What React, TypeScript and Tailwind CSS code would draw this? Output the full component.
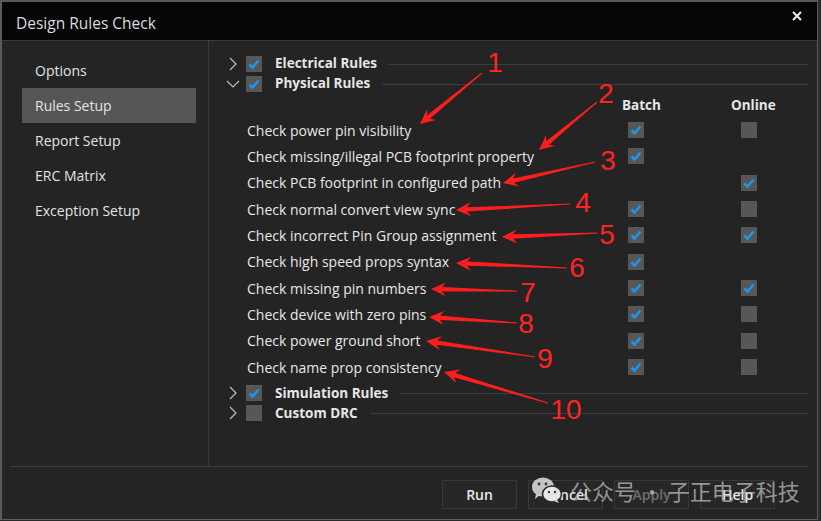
import React from "react";

const FONT = { fontFamily: '"Open Sans", "Noto Sans", "Noto Sans CJK SC", sans-serif' };

function Check({ checked }: { checked: boolean }) {
  return (
    <div className="w-[16px] h-[16px] bg-[#575757] flex items-center justify-center">
      {checked && (
        <svg width="14" height="14" viewBox="0 0 14 14">
          <path d="M2.5 7.5 L5.5 10.5 L11.5 3.5" fill="none" stroke="#1e95ea" strokeWidth="2.6" strokeLinecap="butt" strokeLinejoin="miter" />
        </svg>
      )}
    </div>
  );
}

function Chevron({ open }: { open: boolean }) {
  return (
    <svg width="16" height="16" viewBox="0 0 16 16">
      {open ? (
        <path d="M2 5 L8 11 L14 5" fill="none" stroke="#bdbdbd" strokeWidth="1.2" />
      ) : (
        <path d="M5 2 L11 8 L5 14" fill="none" stroke="#bdbdbd" strokeWidth="1.2" />
      )}
    </svg>
  );
}

function GroupHeader({ label, checked, open }: { label: string; checked: boolean; open: boolean }) {
  return (
    <div className="flex items-center h-[20px]">
      <div className="w-[37px] flex justify-end pr-[5px]">
        <Chevron open={open} />
      </div>
      <Check checked={checked} />
      <div className="ml-[13px] text-[13.5px] font-bold text-[#e6e6e6] leading-none whitespace-nowrap">{label}</div>
      <div className="flex-1 ml-[12px] h-px bg-[#3c3c3c]" />
    </div>
  );
}

type Cell = "on" | "off" | "none";
const rules: { label: string; batch: Cell; online: Cell }[] = [
  { label: "Check power pin visibility", batch: "on", online: "off" },
  { label: "Check missing/illegal PCB footprint property", batch: "on", online: "none" },
  { label: "Check PCB footprint in configured path", batch: "none", online: "on" },
  { label: "Check normal convert view sync", batch: "on", online: "off" },
  { label: "Check incorrect Pin Group assignment", batch: "on", online: "on" },
  { label: "Check high speed props syntax", batch: "on", online: "none" },
  { label: "Check missing pin numbers", batch: "on", online: "on" },
  { label: "Check device with zero pins", batch: "on", online: "off" },
  { label: "Check power ground short", batch: "on", online: "off" },
  { label: "Check name prop consistency", batch: "on", online: "off" },
];

function CellBox({ v }: { v: Cell }) {
  if (v === "none") return <div className="w-[16px] h-[16px]" />;
  return <Check checked={v === "on"} />;
}

function arrowPoints(tx: number, ty: number, px: number, py: number) {
  const dx = px - tx;
  const dy = py - ty;
  const len = Math.sqrt(dx * dx + dy * dy);
  const ux = dx / len;
  const uy = dy / len;
  const nx = -uy;
  const ny = ux;
  const h = 15;
  const w = 7;
  const s = 2.2;
  const t = 0.5;
  const bx = px - ux * h;
  const by = py - uy * h;
  const bx2 = px - ux * (h - 4);
  const by2 = py - uy * (h - 4);
  const pts = [
    [tx + nx * t, ty + ny * t],
    [bx2 + nx * s, by2 + ny * s],
    [bx + nx * w, by + ny * w],
    [px, py],
    [bx - nx * w, by - ny * w],
    [bx2 - nx * s, by2 - ny * s],
    [tx - nx * t, ty - ny * t],
  ];
  return pts.map((p) => `${p[0].toFixed(1)},${p[1].toFixed(1)}`).join(" ");
}

const arrows = [
  { n: "1", nx: 495, ny: 62, t: [482, 73], p: [420, 124] },
  { n: "2", nx: 606, ny: 93, t: [597, 102], p: [539, 150] },
  { n: "3", nx: 608, ny: 160, t: [595, 162], p: [503, 183] },
  { n: "4", nx: 583, ny: 202, t: [570, 204], p: [456, 210] },
  { n: "5", nx: 607, ny: 234, t: [598, 233], p: [502, 237] },
  { n: "6", nx: 577, ny: 267, t: [567, 268], p: [456, 263] },
  { n: "7", nx: 528, ny: 292, t: [517, 291], p: [431, 289] },
  { n: "8", nx: 526, ny: 323, t: [517, 323], p: [429, 317] },
  { n: "9", nx: 545, ny: 358, t: [535, 357], p: [426, 341] },
  { n: "10", nx: 566, ny: 409, t: [548, 403], p: [444, 372] },
];

export default function App() {
  return (
    <div className="w-[821px] h-[521px] bg-[#2b2b2b] relative overflow-hidden" style={FONT}>
      <div className="w-[818px] h-[520px] flex flex-col bg-[#232423] border-t-2 border-l-2 border-b border-r border-[#5a5a5a]">
        {/* title bar */}
        <div className="h-[39px] bg-[#060606] flex items-center justify-between pl-[14px] pr-[14px] border-b border-[#3a3a3a] shrink-0">
          <div className="text-[15.5px] text-[#dcdcdc] mt-[5px]">Design Rules Check</div>
          <svg width="12" height="12" viewBox="0 0 12 12" className="mt-[-10px]">
            <path d="M2 2 L10 10 M10 2 L2 10" stroke="#f0f0f0" strokeWidth="2" />
          </svg>
        </div>
        {/* main */}
        <div className="flex h-[426px] ml-[8px] mr-[8px] border-b border-[#3d3d3d] shrink-0">
          {/* sidebar */}
          <div className="w-[199px] border-r border-[#3a3a3a] pt-[12px] flex flex-col">
            {["Options", "Rules Setup", "Report Setup", "ERC Matrix", "Exception Setup"].map((s) => (
              <div
                key={s}
                className={
                  "h-[35px] mx-[12px] pl-[13px] flex items-center text-[14px] text-[#e4e4e4] " +
                  (s === "Rules Setup" ? "bg-[#565656]" : "")
                }
              >
                {s}
              </div>
            ))}
          </div>
          {/* content */}
          <div className="flex-1 pt-[13px] flex flex-col">
            <GroupHeader label="Electrical Rules" checked open={false} />
            <GroupHeader label="Physical Rules" checked open />
            <div className="flex items-center h-[23px] mt-[0px]">
              <div className="w-[390px]" />
              <div className="w-[74px] pl-[23px] text-[13.5px] font-bold text-[#e6e6e6] whitespace-nowrap">Batch</div>
              <div className="w-[39px]" />
              <div className="w-[74px] pl-[19px] text-[13.5px] font-bold text-[#e6e6e6] whitespace-nowrap">Online</div>
            </div>
            {rules.map((r) => (
              <div key={r.label} className="flex items-center h-[26.33px]">
                <div className="w-[390px] pl-[38px] text-[14px] text-[#e8e8e8] whitespace-nowrap">{r.label}</div>
                <div className="w-[74px] flex justify-center">
                  <CellBox v={r.batch} />
                </div>
                <div className="w-[39px]" />
                <div className="w-[74px] flex justify-center">
                  <CellBox v={r.online} />
                </div>
              </div>
            ))}
            <div className="mt-[3px]" />
            <GroupHeader label="Simulation Rules" checked open={false} />
            <GroupHeader label="Custom DRC" checked={false} open={false} />
          </div>
        </div>
        {/* footer */}
        <div className="flex-1 flex items-center justify-end pr-[42px] gap-[11px] pt-[3px]">
          {["Run", "Cancel", "Apply", "Help"].map((b) => (
            <div
              key={b}
              className={
                "w-[75px] h-[29px] border border-[#383838] bg-[#272727] flex items-center justify-center text-[14px] font-semibold " +
                (b === "Apply" ? "text-[#6e6e6e]" : "text-[#e8e8e8]")
              }
            >
              {b}
            </div>
          ))}
        </div>
      </div>

      {/* watermark */}
      <div className="absolute left-[531px] top-[476px] flex items-center pointer-events-none">
        <svg width="32" height="28" viewBox="0 0 32 28">
          <ellipse cx="12" cy="11" rx="11" ry="9.5" fill="rgba(225,225,225,0.85)" />
          <path d="M5 18 L4 23 L9 19 Z" fill="rgba(225,225,225,0.85)" />
          <ellipse cx="21" cy="18" rx="9.5" ry="8" fill="rgba(235,235,235,0.95)" stroke="#2a2a2a" strokeWidth="1.5" />
          <path d="M26 24 L28 27 L23 25 Z" fill="rgba(235,235,235,0.95)" />
          <circle cx="8" cy="8" r="1.4" fill="#333" />
          <circle cx="15" cy="8" r="1.4" fill="#333" />
          <circle cx="18" cy="16" r="1.2" fill="#333" />
          <circle cx="24" cy="16" r="1.2" fill="#333" />
        </svg>
        <div
          className="ml-[7px] text-[22px] text-[rgba(200,200,200,0.7)] whitespace-nowrap leading-none"
          style={{ fontFamily: '"Noto Sans CJK SC", sans-serif' }}
        >
          公众号 · 子正电子科技
        </div>
      </div>

      {/* annotations */}
      <svg className="absolute left-0 top-0 pointer-events-none" width="821" height="521" viewBox="0 0 821 521">
        {arrows.map((a) => (
          <g key={a.n}>
            <polygon points={arrowPoints(a.t[0], a.t[1], a.p[0], a.p[1])} fill="#ff1e1e" />
            <text
              x={a.nx}
              y={a.ny + 10}
              textAnchor="middle"
              fontSize="28"
              fill="#ff2424"
              fontFamily='"Liberation Sans", sans-serif'
            >
              {a.n}
            </text>
          </g>
        ))}
      </svg>
    </div>
  );
}
